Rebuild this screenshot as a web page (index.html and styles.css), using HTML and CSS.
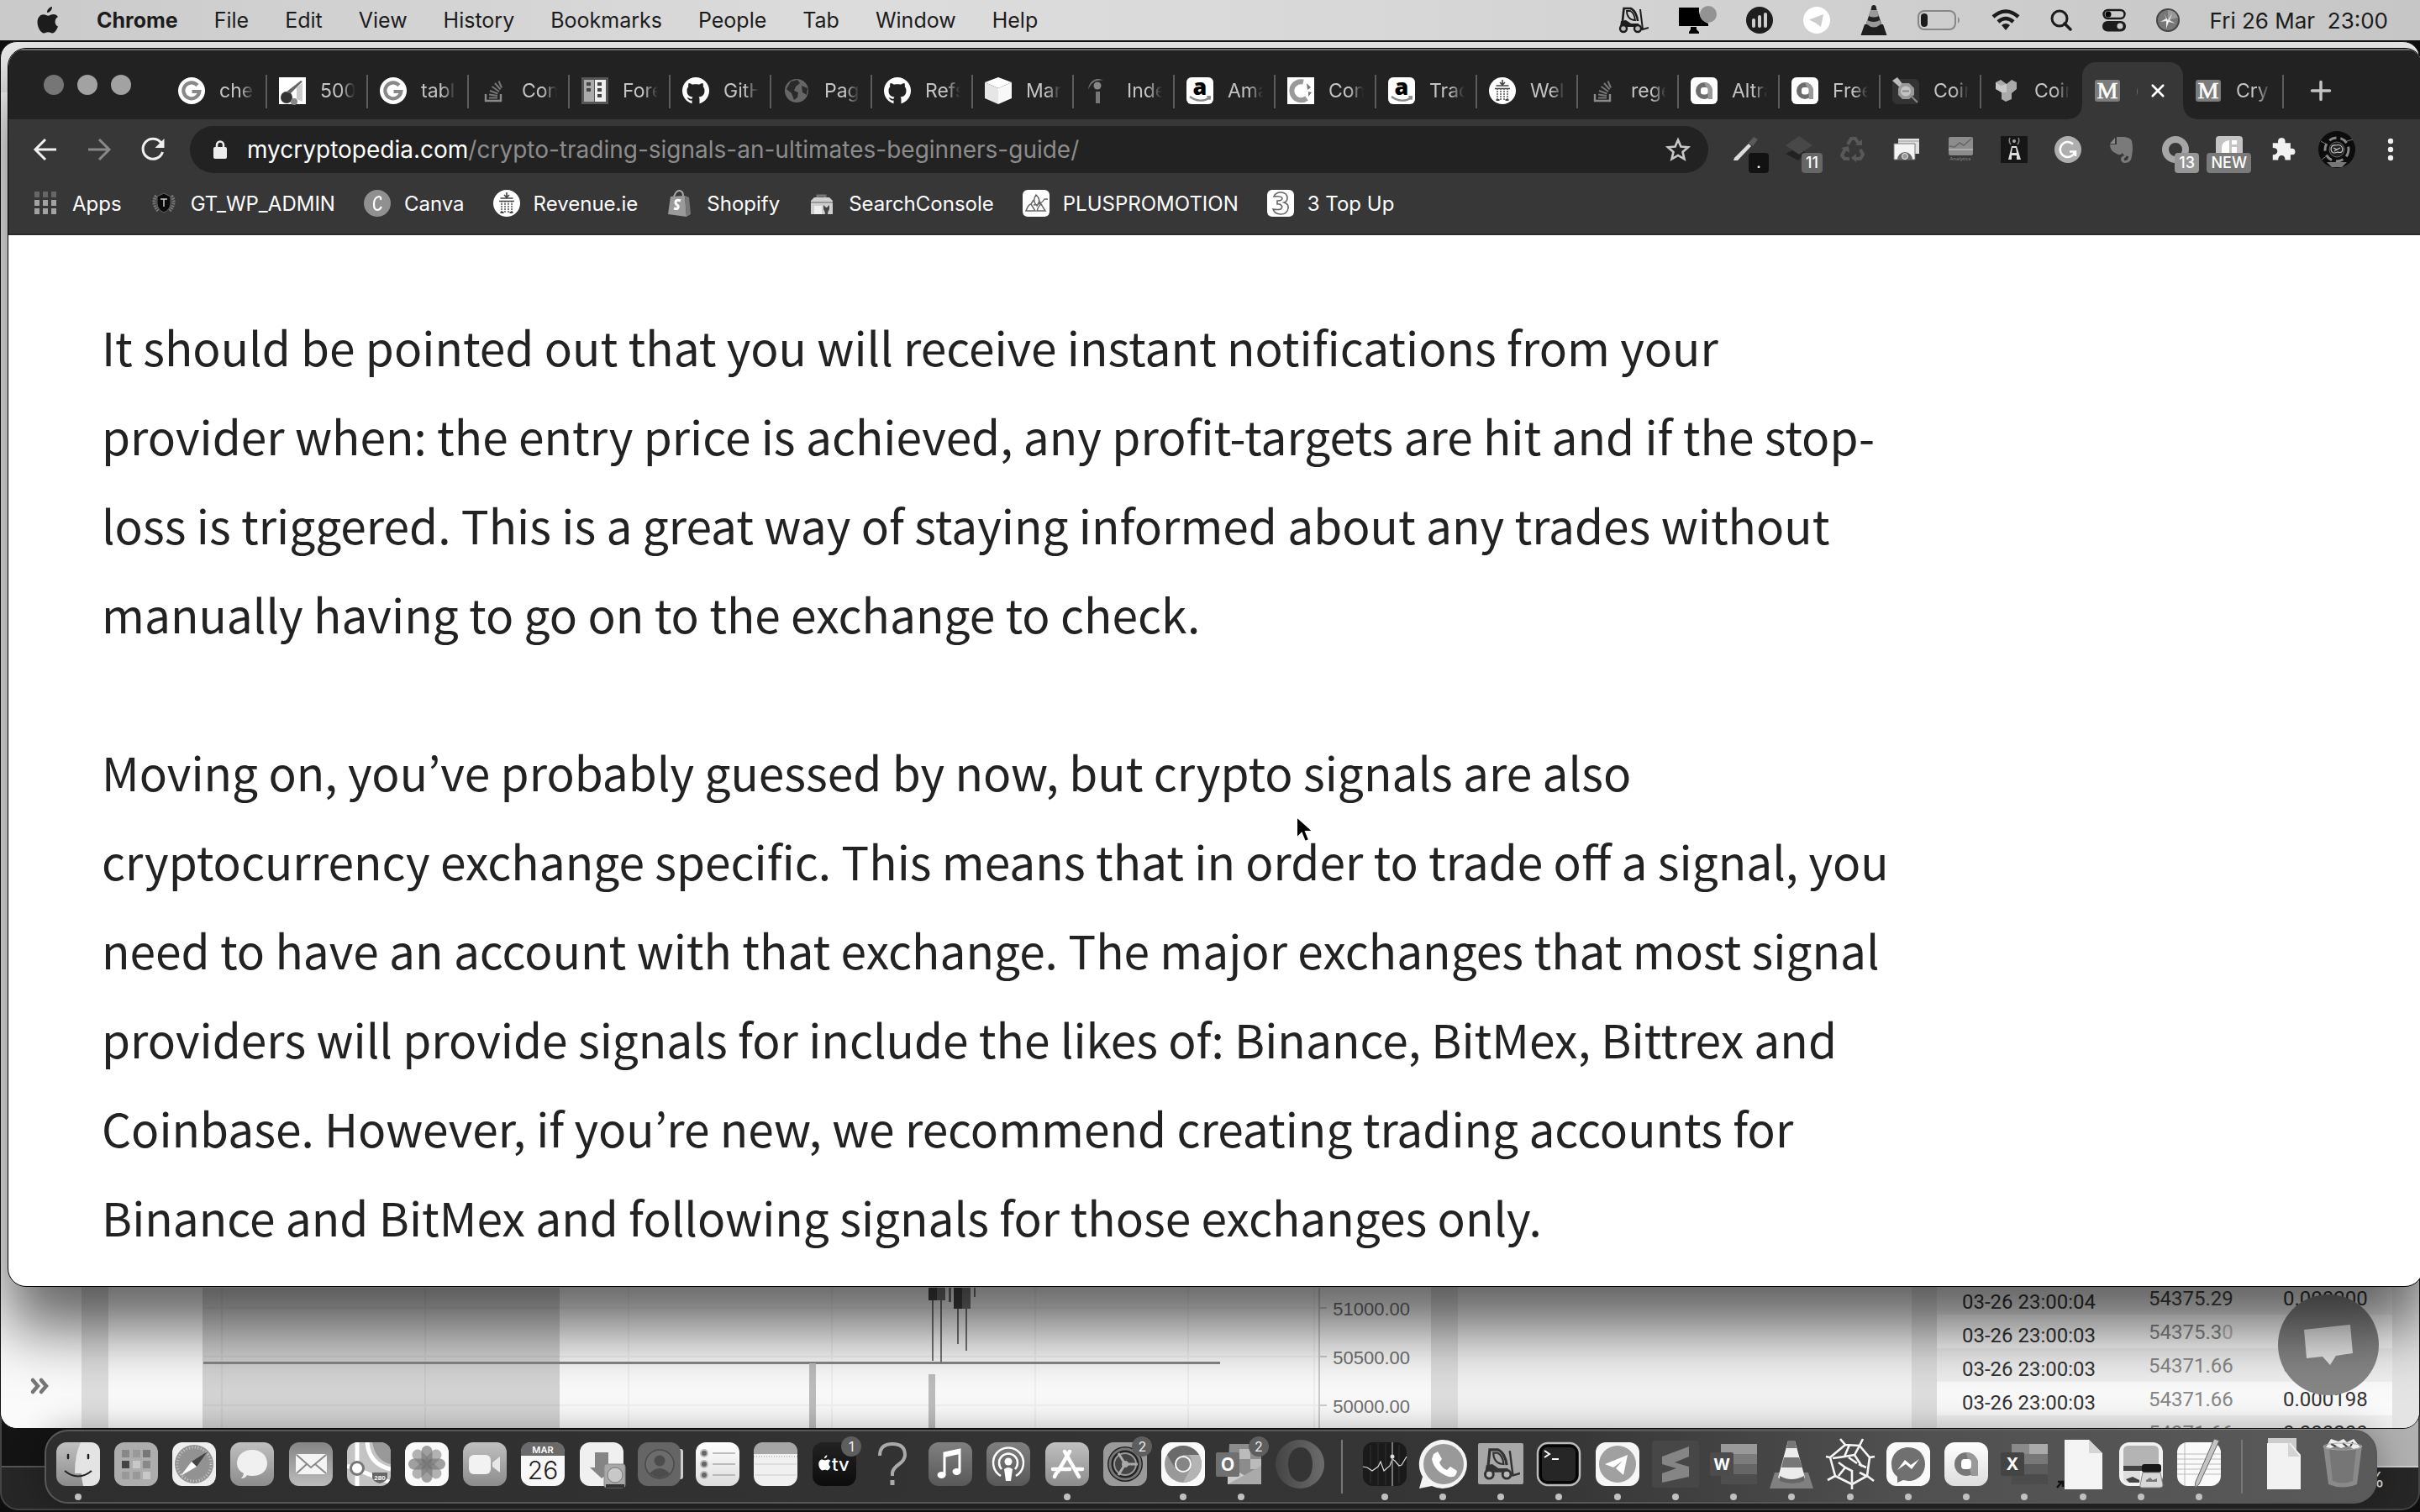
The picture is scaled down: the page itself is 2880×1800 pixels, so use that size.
FILE: index.html
```html
<!DOCTYPE html>
<html lang="en">
<head>
<meta charset="utf-8">
<title>Crypto Trading Signals</title>
<link rel="stylesheet" href="styles.css">
</head>
<body>
<svg class="sprite" aria-hidden="true">
  <defs>
    <linearGradient id="gl" x2="0" y2="1"><stop stop-color="#fff"/><stop offset="1" stop-color="#ddd"/></linearGradient>
    <linearGradient id="gm" x2="0" y2="1"><stop stop-color="#c0c0c0"/><stop offset="1" stop-color="#8c8c8c"/></linearGradient>
    <linearGradient id="gr" x2="0" y2="1"><stop stop-color="#858585"/><stop offset="1" stop-color="#bcbcbc"/></linearGradient>
    <linearGradient id="gd" x2="0" y2="1"><stop stop-color="#808080"/><stop offset="1" stop-color="#585858"/></linearGradient>
    <linearGradient id="gk" x2="0" y2="1"><stop stop-color="#222"/><stop offset="1" stop-color="#0c0c0c"/></linearGradient>
    <linearGradient id="gh"><stop stop-color="#444"/><stop offset="1" stop-color="#6c6c6c"/></linearGradient>
  </defs>
  <symbol id="google" viewBox="0 0 32 32"><circle cx="16" cy="16" r="16" fill="#fff"/><path d="M23 9.500A9.500 9.500 0 1 0 25.300 17H16.500" fill="none" stroke="#888" stroke-width="4.200"/></symbol>
  <symbol id="github" viewBox="0 0 32 32"><circle cx="16" cy="16" r="16" fill="#fff"/><path d="M11.500 32v-4.500c-4 .8-4.500-2-6-3.200 2.600-.4 3 2.200 6 1.400.1-1 .5-1.700 1-2.200-4.600-.6-7-2.700-7-7.500 0-2 .7-3.500 1.700-4.700-.3-1.600-.2-3 .3-4.300 1.800 0 3.200.9 4.400 1.700 2.700-.6 5.500-.6 8.200 0 1.200-.8 2.600-1.700 4.400-1.700.5 1.300.6 2.700.3 4.300 1 1.200 1.700 2.700 1.700 4.700 0 4.800-2.400 6.900-7 7.500.8.800 1 1.800 1 3.200V32z" fill="#222"/></symbol>
  <symbol id="stack" viewBox="0 0 32 32"><path d="M6 20v8h18v-8" fill="none" stroke="#8a8a8a" stroke-width="2.400"/><path d="M10 24.500h10M10 20.500l10 1.500M11 16l9.500 3.500M13.500 11l8.500 6M17 7l6.500 7.500M21.500 4.500l3.500 8" stroke="#777" stroke-width="2"/></symbol>
  <symbol id="amazon" viewBox="0 0 32 32"><rect width="32" height="32" rx="6" fill="#fff"/><text x="16" y="21" text-anchor="middle" font-family="Open Sans, sans-serif" font-weight="800" font-size="27">a</text><path d="M4 23c8 6 17 6 23 1.500M24.500 23l3.500.2-.6 3.500" fill="none" stroke="#888" stroke-width="2.200"/></symbol>
  <symbol id="harp" viewBox="0 0 32 32"><circle cx="16" cy="16" r="16" fill="#fff"/><path d="M16 3v6M13 6l3 3 3-3M8.500 10h15M7 13.500h18" fill="none" stroke="#444" stroke-width="1.600"/><path d="M10 13v14M14 13v14M18 13v14M22 13v14" stroke="#555" stroke-width="1.500" stroke-dasharray="2 1"/><path d="M8.500 27h4M19.500 27h4" stroke="#444" stroke-width="2"/></symbol>
  <symbol id="ring" viewBox="0 0 32 32"><rect width="32" height="32" rx="6" fill="#fff"/><circle cx="16" cy="16" r="10" fill="#6c6c6c"/><path d="M16 6a10 10 0 0 1 10 10v10h-5l-1-10z" fill="#999"/><rect x="12" y="12" width="8.500" height="8.500" rx="3" fill="#fff"/></symbol>
  <symbol id="em" viewBox="0 0 32 32"><rect x="1" y="3" width="30" height="26" rx="3" fill="#7c7c7c"/><text x="16" y="25" text-anchor="middle" font-family="Liberation Serif, serif" font-size="28" fill="#fff" stroke="#fff" stroke-width=".6">M</text></symbol>
  <symbol id="fork" viewBox="0 0 36 32"><path d="M5 17 6.500 2h8c5 2 8 9 8.500 15" fill="none" stroke="currentColor" stroke-width="2.600"/><path d="M10 5h4c4 2 5.500 6 6 11-6 0-10-4-10-11z" fill="none" stroke="currentColor" stroke-width="1.800"/><path d="M3 17l6-1 6 4h9v4H2z" fill="currentColor"/><path d="M26 3l3 24 7-2" fill="none" stroke="currentColor" stroke-width="2"/><circle cx="6" cy="26" r="4" fill="#bbb" stroke="currentColor" stroke-width="2.400"/><circle cx="23" cy="26" r="4" fill="#bbb" stroke="currentColor" stroke-width="2.400"/></symbol>
  <symbol id="apple" viewBox="0 0 26 32"><path d="M18 0c.2 3.500-2.600 7-6 7C11.700 3.700 14.800.4 18 0zM25 23.500C23.500 27.500 21 31.500 18.400 31.500c-2 0-2.600-1.200-5-1.200s-3.100 1.200-5 1.200C4.500 31.500.5 24.500.5 18.500c0-6 3.700-9.300 7.300-9.300 2.300 0 4 1.500 5.600 1.500 1.500 0 3.600-1.700 6.400-1.700 2 0 4 1 5.200 2.900-5 3-4 9.800 0 11.600z" fill="currentColor"/></symbol>
  <symbol id="plane" viewBox="0 0 32 32"><path d="M7 15.500 24 9l-3 15-6-4.500z" fill="currentColor"/></symbol>
</svg>

<header class="menubar">
  <nav class="menus" aria-label="Menu bar">
    <button aria-label="Apple menu"><svg width="26" height="32"><use href="#apple"/></svg></button>
    <button class="strong">Chrome</button><button>File</button><button>Edit</button><button>View</button><button>History</button><button>Bookmarks</button><button>People</button><button>Tab</button><button>Window</button><button>Help</button>
  </nav>
  <div class="status">
    <svg width="36" height="32"><use href="#fork"/></svg>
    <svg width="44" height="36" viewBox="0 0 44 36"><path d="M0 3h24c-1 10 4 16 11 19v3H0z M14 26h7v3l3 3v2H12v-2l2-3z"/><circle cx="35" cy="11" r="10" fill="#939393"/></svg>
    <svg width="32" height="32" viewBox="0 0 32 32"><circle cx="16" cy="16" r="16" fill="#1e1e1e"/><path d="M9 23v-7M16 23V12M23 23V9" stroke="#ccc" stroke-width="4" stroke-linecap="round"/></svg>
    <svg class="pale" width="32" height="32" viewBox="0 0 32 32"><circle cx="16" cy="16" r="16" fill="#fff"/><use href="#plane"/></svg>
    <svg width="32" height="36" viewBox="0 0 32 36"><path d="M13 4q0-4 3-4t3 4l8 24H5z" fill="#222"/><path d="M12 6l-2 7q6 3 12 0l-2-7zM8 18l-1.500 6q9 7 19 0L23 18q-7 4-15 0z" fill="#999"/><path d="M5 23h3q8 7 16 0h3l4.500 13H.5z" fill="#1e1e1e"/></svg>
    <svg width="52" height="24" viewBox="0 0 52 24"><rect x="1" y="1" width="44" height="22" rx="7" fill="none" stroke="#868686" stroke-width="2"/><rect x="4" y="4" width="8" height="16" rx="4" fill="#1c1c1c"/><path d="M48 8q4 4 0 8z" fill="#868686"/></svg>
    <svg width="34" height="26" viewBox="0 0 34 26"><path d="M2 9q15-13 30 0M8 15q9-8 18 0" fill="none" stroke="#1c1c1c" stroke-width="4.500"/><path d="M12 19q5-4 10 0l-5 6z" fill="#1c1c1c"/></svg>
    <svg width="26" height="26" viewBox="0 0 26 26"><circle cx="11" cy="11" r="9" fill="none" stroke="#1c1c1c" stroke-width="3"/><path d="M17 17l7 7" stroke="#1c1c1c" stroke-width="3.500" stroke-linecap="round"/></svg>
    <svg width="28" height="28" viewBox="0 0 28 28"><rect x="1.500" y="2" width="25" height="10" rx="5" fill="none" stroke="#1c1c1c" stroke-width="2.500"/><circle cx="7" cy="7" r="3.500"/><rect y="15" width="28" height="12.500" rx="6" fill="#1c1c1c"/><circle cx="21" cy="21" r="3.500" fill="#ccc"/></svg>
    <svg width="28" height="28" viewBox="0 0 28 28"><circle cx="14" cy="14" r="13" fill="#777" stroke="#444" stroke-width="2"/><path d="M14 2q9 0 12 9L14 14z" fill="#999"/><path d="M14 14l5-8-3 8 7 4-8-2-3 8 0-9-7 1 7-4-3-6z" fill="#eee"/></svg>
    <time>Fri 26 Mar&nbsp; 23:00</time>
  </div>
</header>

<main class="desktop">
  <section class="window behind" aria-hidden="true"><span>%</span></section>

  <section class="window exchange" aria-label="Exchange">
    <div class="rail"><svg width="22" height="18" viewBox="0 0 22 18"><path d="M2 2l6 7-6 7M12 2l6 7-6 7" fill="none" stroke="#777" stroke-width="4.500" stroke-linecap="round"/></svg></div>
    <div class="chart">
      <svg width="1574" height="167" viewBox="128 1533 1574 167">
        <rect x="240" y="1533" width="425" height="167" fill="#d4d4d4"/>
        <path d="M263 1533v167M505 1533v167M747 1533v167M989 1533v167M1231 1533v167M1413 1533v167M1563 1533v167M241 1557h1328M241 1615h1328M241 1673h1328" stroke="#000" stroke-opacity=".04" stroke-width="2"/>
        <path d="M1569 1533v167M1569 1557h9M1569 1615h9M1569 1673h9" stroke="#ccc" stroke-width="2"/>
        <rect x="241" y="1621" width="1210" height="3" fill="#888"/>
        <path d="M962 1623h8v77h-8zM1104 1636h8v64h-8z" fill="#bdbdbd"/>
        <path d="M1109 1540v80M1119 1540v82M1139 1550v50M1149 1550v58" stroke="#777" stroke-width="2"/>
        <path d="M1104 1533h10v15h-10zM1134 1533h10v25h-10z" fill="#444"/>
        <path d="M1114 1533h10v15h-10zM1144 1533h10v25h-10zM1128 1533h3v17h-3zM1158 1533h2v11h-2z" fill="#777"/>
      </svg>
      <ul class="scale"><li>51000.00</li><li>50500.00</li><li>50000.00</li></ul>
    </div>
    <div class="book"></div>
    <div class="trades">
      <table>
        <tr><td>03-26 23:00:04</td><td class="sell">54375.29</td><td>0.000200</td></tr>
        <tr><td>03-26 23:00:03</td><td class="buy">54375.3<i>0</i></td><td></td></tr>
        <tr><td>03-26 23:00:03</td><td class="buy">54371.66</td><td>0.000200</td></tr>
        <tr><td>03-26 23:00:03</td><td class="buy">54371.66</td><td>0.000198</td></tr>
        <tr><td></td><td class="buy">54371.66</td><td>0.000200</td></tr>
      </table>
      <button class="chat" aria-label="Chat"><svg width="60" height="50" viewBox="0 0 60 50"><path d="M1 7 56 1l3 34-20 3-7 11-9-10-19 2z" fill="#e6e6e6"/></svg></button>
    </div>
  </section>

  <section class="window browser" aria-label="Chrome">
    <div class="tabstrip">
      <div class="lights"><button aria-label="Close"></button><button aria-label="Minimise"></button><button aria-label="Zoom"></button></div>
      <nav class="tabs" aria-label="Tabs">
        <a href="#t1"><svg><use href="#google"/></svg><span>che</span></a>
        <a href="#t2"><svg viewBox="0 0 32 32"><path fill="#fff" d="M0 0h32v32H0z"/><circle cx="9" cy="24" r="7" fill="#333"/><circle cx="18" cy="29" r="4" fill="#888"/><path d="M8 18 26 4l2 1-14 14z" fill="#666"/><path d="M21 26V12l7-5v22z" fill="#ccc"/></svg><span>500</span></a>
        <a href="#t3"><svg><use href="#google"/></svg><span>tabl</span></a>
        <a href="#t4"><svg><use href="#stack"/></svg><span>Con</span></a>
        <a href="#t5"><svg viewBox="0 0 32 32"><path fill="#555" d="M0 0h32v32H0z"/><path d="M3 3h12v26H3z" fill="#aaa"/><path d="M16 3h13v26H16z" fill="#eee"/><path d="M6 6h5v4H6zM6 13h5v4H6zM19 6h5v4h-5zM19 13h5v4h-5zM19 20h5v4h-5z" fill="#444"/></svg><span>Fore</span></a>
        <a href="#t6"><svg><use href="#github"/></svg><span>GitH</span></a>
        <a href="#t7"><svg viewBox="0 0 32 32"><circle cx="16" cy="16" r="14" fill="#666"/><path d="M9 5l8-2 3 4-5 4-2 5 5 2-1 6-4 3-3-8-6-5zM22 10l7 3-1 8-5-3z" fill="#2a2a2a"/></svg><span>Pag</span></a>
        <a href="#t8"><svg><use href="#github"/></svg><span>Refs</span></a>
        <a href="#t9"><svg viewBox="0 0 32 32"><path d="M16 0l16 6-16 7L0 6z" fill="#fff"/><path d="M0 6l16 7v19L0 25z" fill="#e6e6e6"/><path d="M32 6l-16 7v19l16-7z" fill="#f8f8f8"/></svg><span>Mar</span></a>
        <a href="#t10"><svg viewBox="0 0 32 32"><path d="M3 15C4 4 13-1 21 4 12 2 6 7 3 15z" fill="#777"/><circle cx="14" cy="10" r="4.500" fill="#888"/><path d="M12 17h5v14h-5z" fill="#777"/></svg><span>Inde</span></a>
        <a href="#t11"><svg><use href="#amazon"/></svg><span>Ama</span></a>
        <a href="#t12"><svg viewBox="0 0 32 32"><path fill="#fff" d="M0 0h32v32H0z"/><path d="M19 5.500A11 11 0 1 0 23 25" fill="none" stroke="#999" stroke-width="6"/><path d="M23 7l5 5-4 3zM25 17l4 1-4 5z" fill="#777"/></svg><span>Con</span></a>
        <a href="#t13"><svg><use href="#amazon"/></svg><span>Trac</span></a>
        <a href="#t14"><svg><use href="#harp"/></svg><span>Wel</span></a>
        <a href="#t15"><svg><use href="#stack"/></svg><span>rege</span></a>
        <a href="#t16"><svg><use href="#ring"/></svg><span>Altra</span></a>
        <a href="#t17"><svg><use href="#ring"/></svg><span>Free</span></a>
        <a href="#t18"><svg viewBox="0 0 32 32"><rect y="2" width="32" height="30" rx="6" fill="#333"/><path d="M0 4l6-4 7 9-4 3z" fill="#bbb"/><path d="M12 7h8l6 6v8l-6 5h-8l-5-5v-8z" fill="#999"/><circle cx="16" cy="16.500" r="6" fill="#c4c4c4"/><path d="M12 16.500h8M22 22l8 8" stroke="#888" stroke-width="2"/></svg><span>Coin</span></a>
        <a href="#t19"><svg viewBox="0 0 32 32"><path d="M3 6l6-3 7 5 6-5 6 3v8l-6 5v7l-7 3-5-3v-8l-7-5z" fill="#aaa"/><path d="M3 6l6 4 7-2v10l-6 0-7-4z" fill="#c8c8c8"/></svg><span>Coin</span></a>
        <a href="#t20" class="active" aria-current="page"><svg><use href="#em"/></svg><span class="sliver">(</span><button aria-label="Close tab"><svg viewBox="0 0 18 18"><path d="M2 2l14 14M16 2 2 16" stroke="#fff" stroke-width="3" stroke-linecap="round"/></svg></button></a>
        <a href="#t21"><svg><use href="#em"/></svg><span>Cry</span></a>
      </nav>
      <button class="newtab" aria-label="New tab"><svg width="24" height="24" viewBox="0 0 24 24"><path d="M12 1.500v21M1.500 12h21" stroke="#c4c4c4" stroke-width="3.500" stroke-linecap="round"/></svg></button>
    </div>

    <div class="toolbar">
      <button aria-label="Back"><svg width="28" height="28" viewBox="0 0 28 28"><path d="M27 14H3M14 2 2 14l12 12" fill="none" stroke="#f0f0f0" stroke-width="3"/></svg></button>
      <button aria-label="Forward"><svg width="28" height="28" viewBox="0 0 28 28"><path d="M1 14h24M14 2l12 12-12 12" fill="none" stroke="#888" stroke-width="3"/></svg></button>
      <button aria-label="Reload"><svg width="28" height="28" viewBox="0 0 28 28"><path d="M24 6.500A12 12 0 1 0 25.500 17" fill="none" stroke="#f0f0f0" stroke-width="3"/><path d="M27.500 1v11h-11z" fill="#f0f0f0"/></svg></button>
      <div class="omnibox">
        <svg width="16" height="22" viewBox="0 0 16 22"><rect y="8" width="16" height="14" rx="2" fill="#eee"/><path d="M4 9V5.500a4 4 0 0 1 8 0V9" fill="none" stroke="#eee" stroke-width="2.500"/></svg>
        <a href="#top">mycryptopedia.com<span>/crypto-trading-signals-an-ultimates-beginners-guide/</span></a>
        <button aria-label="Bookmark this tab"><svg width="30" height="30" viewBox="0 0 30 30"><path d="M15 3.500l3.400 8 8.600.7-6.500 5.700 2 8.500-7.500-4.500-7.500 4.500 2-8.500L3 12.200l8.600-.7z" fill="none" stroke="#c8c8c8" stroke-width="2.600"/></svg></button>
      </div>
      <div class="extensions">
        <button aria-label="Eyedropper"><svg viewBox="0 0 32 32"><path d="M20 8l6-7 5 3-6 8z" fill="#5a5a5a"/><path d="M3 26 20 9l3 3L7 29H2z" fill="#ddd"/></svg><b class="black">.</b></button>
        <button aria-label="Layers"><svg viewBox="0 0 32 32"><path d="M0 21l16-8 8 7-9 9z" fill="#222"/><path d="M16 0l16 11-16 11L0 11z" fill="#484848"/></svg><b>11</b></button>
        <button aria-label="Recycle"><svg viewBox="0 0 32 32"><path d="M10 10l4-7h5l4 6M25 16l3 6-3 5h-7M12 27H6l-3-4 4-8" fill="none" stroke="#585858" stroke-width="4"/><path d="M19 11h8V4zM20 21v10l-6-5zM2 14l9-2 1 8z" fill="#585858"/></svg></button>
        <button aria-label="Screens"><svg viewBox="0 0 32 32"><path d="M6 3h25v18H6z" fill="#e0e0e0"/><path d="M6 6h25" stroke="#999"/><path d="M1 9h25v19H1z" fill="#f4f4f4" stroke="#777"/><path d="M5 28a9 9 0 0 1 18 0z" fill="#666"/><circle cx="14" cy="24" r="3.500" fill="#999" stroke="#eee"/></svg></button>
        <button aria-label="Analytics"><svg viewBox="0 0 32 32"><rect x="2" y="1" width="29" height="22" rx="2" fill="#8c8c8c"/><path d="M3 12l6 1 6-5 5 3 9-8" fill="none" stroke="#666" stroke-width="1.500"/><path d="M2 16h29" stroke="#ccc"/><text x="16" y="29" text-anchor="middle" font-family="Noto Sans, sans-serif" font-size="6" fill="#888">Analytics</text></svg></button>
        <button aria-label="Antenna"><svg viewBox="0 0 32 32"><path fill="#161616" d="M0 0h32v32H0z"/><path d="M13 12h6l5 16h-5v-5h-6v5H9z" fill="#ddd"/><path d="M14 14h4l1 6h-6z" fill="#161616"/><circle cx="16" cy="6" r="2" fill="#aaa"/><path d="M11 2q-2 4 1 8M21 2q2 4-1 8" fill="none" stroke="#888" stroke-width="1.500"/></svg></button>
        <button aria-label="Grammar"><svg viewBox="0 0 32 32"><circle cx="16" cy="16" r="16" fill="#aeaeae"/><path d="M22 9.500A9 9 0 1 0 24.500 18M18 18.500h7V24" fill="none" stroke="#fff" stroke-width="2.600"/></svg></button>
        <button aria-label="Notes"><svg viewBox="0 0 32 32"><path d="M10 1h9q8 1 9 5 2 8 0 18-1 8-8 8-5 0-5-5 1-4 6-4v2q-3 1-2 4 5 1 5-5-6 0-7-4-3 4-7 1-8-3-8-11h8z" fill="#7a7a7a"/><path d="M8 2v7H2z" fill="#8a8a8a"/></svg></button>
        <button aria-label="Ring"><svg viewBox="0 0 32 32"><circle cx="16" cy="16" r="12" fill="none" stroke="#a6a6a6" stroke-width="8"/></svg><b class="pale">13</b></button>
        <button aria-label="Guide"><svg viewBox="0 0 32 32"><rect width="32" height="32" rx="4" fill="#c4c4c4"/><path d="M7 24V14q0-8 9-9v19zM19 13h6v12h-6zM19 5h6v5h-6z" fill="#fff"/></svg><b class="wide">NEW</b></button>
        <button aria-label="Extensions"><svg viewBox="0 0 32 32"><path d="M3 8h7q-1-7 4.500-7T19 8h7v7q6-1 6 4t-6 4v7h-7q0-6-4.500-6T10 30H3v-7q6 0 6-4.500T3 14z" fill="#f2f2f2" transform="translate(1 1) scale(.92)"/></svg></button>
        <button aria-label="Profile"><svg class="avatar" viewBox="0 0 44 44"><circle cx="22" cy="22" r="22" fill="#0c0c0c"/><circle cx="22" cy="22" r="14" fill="none" stroke="#888" stroke-width="3" stroke-dasharray="9 5"/><circle cx="22" cy="22" r="9" fill="#222" stroke="#666"/><path d="M15 22q0-6 6-5 6-2 8 4 0 6-6 4-7 3-8-3zM18 20l4 2 4-2M19 24l3-2" fill="none" stroke="#ccc" stroke-width="1.200"/><path d="M10 37h24l-6 6H16z" fill="#777"/><path d="M3 12l7 4M34 12l7-2M4 34l7-5" stroke="#777"/></svg></button>
        <button aria-label="Menu"><svg viewBox="0 0 32 32"><circle cx="16" cy="6" r="3.200" fill="#f0f0f0"/><circle cx="16" cy="16" r="3.200" fill="#f0f0f0"/><circle cx="16" cy="26" r="3.200" fill="#f0f0f0"/></svg></button>
      </div>
    </div>

    <nav class="bookmarks" aria-label="Bookmarks">
      <a href="#b0"><svg viewBox="0 0 32 32"><path d="M3 2h6v7H3zM13 2h6v7h-6zM23 2h6v7h-6z" fill="#666"/><path d="M3 12h6v7H3zM13 12h6v7h-6zM23 12h6v7h-6zM3 22h6v7H3zM13 22h6v7h-6zM23 22h6v7h-6z" fill="#a2a2a2"/></svg>Apps</a>
      <a href="#b1"><svg viewBox="0 0 32 32"><path d="M7 7q-6 8 2 18M25 7q6 8-2 18" fill="none" stroke="#777" stroke-width="4" stroke-dasharray="2 1"/><path d="M16 4l8 4v9q-1 7-8 10-7-3-8-10V8z" fill="#0a0a0a" stroke="#666"/><path d="M12 11h8M16 11v9" stroke="#ccc" stroke-width="1.500"/></svg>GT_WP_ADMIN</a>
      <a href="#b2"><svg viewBox="0 0 32 32"><circle cx="16" cy="16" r="16" fill="#909090"/><path d="M20 12q1-4-2-4-6 1-6 9 0 7 4 7 3 0 5-4" fill="none" stroke="#fff" stroke-width="2.200"/></svg>Canva</a>
      <a href="#b3"><svg><use href="#harp"/></svg>Revenue.ie</a>
      <a href="#b4"><svg viewBox="0 0 32 32"><path d="M5 8l17-1 2 25-22-3z" fill="#9a9a9a"/><path d="M22 7l5 2 2 20-5 3z" fill="#777"/><path d="M9 8q3-8 7-7 4 1 4 6" fill="none" stroke="#aaa" stroke-width="2"/><path d="M17 13q-6-2-6 2 0 2 3 4 1 5-5 3" fill="none" stroke="#fff" stroke-width="3"/></svg>Shopify</a>
      <a href="#b5"><svg viewBox="0 0 32 32"><path d="M11 9V7h9v2" fill="none" stroke="#777" stroke-width="3"/><path d="M3 13l4-4h18l4 4v16H3z" fill="#cfcfcf"/><path d="M3 15h26" stroke="#999" stroke-width="2"/><path d="M7 19h9v10H7z" fill="#eee"/><path d="M18 18v5q2 3 2 6h3q0-3 2-6v-5l-3 3h-1z" fill="#444"/></svg>SearchConsole</a>
      <a href="#b6"><svg viewBox="0 0 32 32"><rect width="32" height="32" rx="6" fill="#fff"/><path d="M16 6q7 6 1 13-6-6-1-13zM4 25q3-8 6-8l5 8zM17 25q2-6 5-8l5 8zM13 18q9 0 13-7h4M10 17l3-5M22 17l-3-5" fill="none" stroke="#666" stroke-width="1.500"/></svg>PLUSPROMOTION</a>
      <a href="#b7"><svg viewBox="0 0 32 32"><rect width="32" height="32" rx="6" fill="#fff"/><path d="M8 8q2-5 8-5 8 0 8 7 0 4-4 5 6 2 5 7-1 7-9 7-7 0-9-6 6 1 9 0 4-3-1-6h-3v-4q6 0 6-3-1-3-10-2z" fill="#fff" stroke="#666" stroke-width="1.600"/></svg>3 Top Up</a>
    </nav>

    <article id="top">
      <p>It should be pointed out that you will receive instant notifications from your provider when: the entry price is achieved, any profit-targets are hit and if the stop-loss is triggered. This is a great way of staying informed about any trades without manually having to go on to the exchange to check.</p>
      <p>Moving on, you’ve probably guessed by now, but crypto signals are also cryptocurrency exchange specific. This means that in order to trade off a signal, you need to have an account with that exchange. The major exchanges that most signal providers will provide signals for include the likes of: Binance, BitMex, Bittrex and Coinbase. However, if you’re new, we recommend creating trading accounts for Binance and BitMex and following signals for those exchanges only.</p>
    </article>
  </section>
</main>

<nav class="dock" aria-label="Dock">
  <button class="on" aria-label="Finder"><svg viewBox="0 0 52 52"><rect width="52" height="52" rx="12" fill="url(#gm)"/><path d="M29 0h11q12 0 12 12v28q0 12-12 12h-8q-2-8-2-15h-8Q22 15 29 0z" fill="#e4e4e4"/><path d="M14 15v4M38 15v4" stroke="#222" stroke-width="2.500" stroke-linecap="round"/><path d="M10 34q16 13 32 0" fill="none" stroke="#222" stroke-width="2"/></svg></button>
  <button aria-label="Launchpad"><svg viewBox="0 0 52 52"><rect width="52" height="52" rx="12" fill="#adadad"/><path d="M9 9h9v9H9zM34 22h9v9h-9z" fill="#888"/><path d="M22 9h9v9h-9zM9 35h9v9H9zM22 35h9v9h-9z" fill="#999"/><path d="M34 9h9v9h-9z" fill="#777"/><path d="M9 22h9v9H9z" fill="#444"/><path d="M22 22h9v9h-9zM34 35h9v9h-9z" fill="#c8c8c8"/></svg></button>
  <button aria-label="Safari"><svg viewBox="0 0 52 52"><rect width="52" height="52" rx="12" fill="#eee"/><circle cx="26" cy="26" r="23" fill="#929292"/><circle cx="26" cy="26" r="20" fill="none" stroke="#ccc" stroke-width="3" stroke-dasharray="1 2.500"/><path d="M42 11 29 29l-6-6z" fill="#444"/><path d="M10 40 23 23l6 6z" fill="#fff"/></svg></button>
  <button aria-label="Messages"><svg viewBox="0 0 52 52"><rect width="52" height="52" rx="12" fill="url(#gm)"/><path d="M26 9c11 0 18 7 18 16s-7 15-18 15q-4 0-6-1-2 4-7 4 3-3 3-6-8-4-8-12c0-9 7-16 18-16z" fill="#f0f0f0"/></svg></button>
  <button aria-label="Mail"><svg viewBox="0 0 52 52"><rect width="52" height="52" rx="12" fill="url(#gr)"/><rect x="8" y="14" width="37" height="24" rx="3" fill="#f4f4f4"/><path d="M9 15l17 15 18-15M9 37l12-11M44 37 31 26" fill="none" stroke="#888" stroke-width="2"/></svg></button>
  <button aria-label="Maps"><svg class="tile" viewBox="0 0 52 52"><path d="M0 0h52v52H0z" fill="#c4c4c4"/><path d="M30 0q4 22 22 26V0z" fill="#999"/><path d="M24 0q2 26 28 32M12 0v52M0 28l52 20" fill="none" stroke="#fff" stroke-width="5"/><circle cx="12" cy="31" r="7.500" fill="#fff" stroke="#777" stroke-width="3"/><path d="M30 36h18v6q-1 5-9 7-8-2-9-7z" fill="#666"/><text x="39" y="45" text-anchor="middle" font-family="Liberation Sans, sans-serif" font-weight="700" font-size="8" fill="#fff">280</text></svg></button>
  <button aria-label="Photos"><svg viewBox="0 0 52 52"><rect width="52" height="52" rx="12" fill="#fafafa"/><g fill="#555" fill-opacity=".55"><rect x="19.500" y="4" width="13" height="22" rx="6.500"/><rect x="19.500" y="26" width="13" height="22" rx="6.500"/><rect x="4" y="19.500" width="22" height="13" rx="6.500"/><rect x="26" y="19.500" width="22" height="13" rx="6.500"/><g transform="rotate(45 26 26)" fill="#777"><rect x="19.500" y="4" width="13" height="22" rx="6.500"/><rect x="19.500" y="26" width="13" height="22" rx="6.500"/><rect x="4" y="19.500" width="22" height="13" rx="6.500"/><rect x="26" y="19.500" width="22" height="13" rx="6.500"/></g></g></svg></button>
  <button aria-label="FaceTime"><svg viewBox="0 0 52 52"><rect width="52" height="52" rx="12" fill="url(#gm)"/><rect x="7" y="15" width="26" height="23" rx="6" fill="#f2f2f2"/><path d="M35 24l9-7v19l-9-7z" fill="#e8e8e8"/></svg></button>
  <button aria-label="Calendar"><svg viewBox="0 0 52 52"><rect width="52" height="52" rx="12" fill="#f8f8f8"/><path d="M0 16v-4Q0 0 12 0h28q12 0 12 12v4z" fill="#6a6a6a"/><text x="26" y="13" text-anchor="middle" font-family="Inter, sans-serif" font-weight="600" font-size="11" fill="#fff">MAR</text><text x="26" y="44" text-anchor="middle" font-family="Inter, sans-serif" font-weight="300" font-size="30" fill="#222">26</text></svg></button>
  <button aria-label="Installer"><svg viewBox="0 0 52 52"><rect width="52" height="52" rx="12" fill="#f0f0f0"/><path d="M18 12h16v18h8L26 43 12 30h6z" fill="#858585"/><rect x="29" y="26" width="25" height="28" rx="3" fill="#a8a8a8" stroke="#888"/><circle cx="42" cy="39" r="9" fill="#c8c8c8" stroke="#777"/><path d="M31 50h22v4H31z" fill="#333"/></svg></button>
  <button aria-label="Contacts"><svg viewBox="0 0 52 52"><rect x="4" y="8" width="50" height="36" rx="3" fill="#ccc"/><rect width="51" height="52" rx="12" fill="#656565"/><circle cx="26" cy="26" r="17" fill="#6c6c6c" stroke="#4a4a4a" stroke-width="1.500"/><circle cx="26" cy="22" r="6.500" fill="#4c4c4c"/><path d="M14 37q12-12 24 0-12 10-24 0z" fill="#4c4c4c"/></svg></button>
  <button aria-label="Reminders"><svg viewBox="0 0 52 52"><rect width="52" height="52" rx="12" fill="url(#gl)"/><path d="M20 13h27M20 26h27M20 39h27" stroke="#aaa" stroke-width="1.500"/><g fill="#666" stroke="#bbb" stroke-width="2"><circle cx="10" cy="13" r="4"/><circle cx="10" cy="26" r="4"/><circle cx="10" cy="39" r="4"/></g></svg></button>
  <button aria-label="Notes"><svg viewBox="0 0 52 52"><rect width="52" height="52" rx="12" fill="#f0f0f0"/><path d="M0 14v-2Q0 0 12 0h28q12 0 12 12v2z" fill="#a6a6a6"/><path d="M0 17h52" stroke="#999" stroke-dasharray="1 2"/><path d="M1 26h50M1 39h50" stroke="#ccc"/></svg></button>
  <button aria-label="TV"><svg class="light" viewBox="0 0 52 52"><rect width="52" height="52" rx="12" fill="url(#gk)"/><use href="#apple" x="7" y="15" width="15" height="19"/><text x="23" y="34" font-family="Inter, sans-serif" font-weight="500" font-size="22" fill="#fff">tv</text></svg><b>1</b></button>
  <button aria-label="Unknown"><svg viewBox="0 0 52 52"><path d="M11 16q0-14 15-14t15 13q0 6-7 11t-8 10v4" fill="none" stroke="#aaa" stroke-width="4"/><path d="M23.500 45h5v6h-5z" fill="#aaa"/></svg></button>
  <button aria-label="Music"><svg viewBox="0 0 52 52"><rect width="52" height="52" rx="12" fill="url(#gd)"/><path d="M19 39V13l18-4v26" fill="none" stroke="#fff" stroke-width="3"/><path d="M19 12l18-4v6l-18 4z" fill="#fff"/><ellipse cx="15.500" cy="39" rx="5" ry="4" fill="#fff"/><ellipse cx="33.500" cy="35" rx="5" ry="4" fill="#fff"/></svg></button>
  <button aria-label="Podcasts"><svg viewBox="0 0 52 52"><rect width="52" height="52" rx="12" fill="url(#gd)"/><circle cx="26" cy="23" r="4.500" fill="#fff"/><path d="M21 32q5-4 10 0l-2 14h-6z" fill="#fff"/><path d="M18 32a11 11 0 1 1 16 0M17 40a18 18 0 1 1 18 0" fill="none" stroke="#fff" stroke-width="2.500"/></svg></button>
  <button class="on" aria-label="App Store"><svg viewBox="0 0 52 52"><rect width="52" height="52" rx="12" fill="url(#gm)"/><path d="M29 11 15 35M23 11l17 30M9 32h20M36 32h8M13 37l-2 4" stroke="#fff" stroke-width="4.500" stroke-linecap="round"/></svg></button>
  <button aria-label="System Preferences"><svg viewBox="0 0 52 52"><rect width="52" height="52" rx="12" fill="#9a9a9a"/><circle cx="26" cy="26" r="21" fill="#222"/><circle cx="26" cy="26" r="18" fill="none" stroke="#777" stroke-width="3"/><circle cx="26" cy="26" r="13" fill="#444" stroke="#999" stroke-width="2"/><path d="M26 26h15M26 26 18 13M26 26l-8 13" stroke="#aaa" stroke-width="3"/><circle cx="26" cy="26" r="4" fill="#aaa"/></svg><b>2</b></button>
  <button class="on" aria-label="Chrome"><svg viewBox="0 0 52 52"><rect width="52" height="52" rx="12" fill="#fafafa"/><circle cx="26" cy="26" r="22" fill="#999"/><path d="M7 15a22 22 0 0 1 38 0H26l-10 15z" fill="#6a6a6a"/><path d="M45 15a22 22 0 0 1-19 33l9-17q4-8-2-16z" fill="#b4b4b4"/><circle cx="26" cy="26" r="10" fill="#fafafa"/><circle cx="26" cy="26" r="8" fill="#858585"/></svg></button>
  <button class="on" aria-label="Outlook"><svg viewBox="0 0 52 52"><path d="M12 2h38v48H10z" fill="#8c8c8c"/><path d="M24 8h13v12H24zM37 20h13v12H37z" fill="#bbb"/><path d="M10 28l21 12 19-12v22H10z" fill="#ccc"/><path d="M10 50l40-22v22z" fill="#aaa"/><rect x="-4" y="12" width="28" height="29" rx="2" fill="#707070"/><text x="10" y="34" text-anchor="middle" font-family="Inter, sans-serif" font-weight="700" font-size="21" fill="#fff">O</text></svg><b>2</b></button>
  <button aria-label="Opera"><svg viewBox="0 0 52 52"><path d="M26-3a29 29 0 1 0 .1 0zM27 6c9 0 14 9 14 20S36 47 27 47 12 38 12 26 18 6 27 6z" fill="url(#gh)" fill-rule="evenodd"/></svg></button>
  <hr>
  <button class="on" aria-label="Stocks"><svg viewBox="0 0 52 52"><rect width="52" height="52" rx="12" fill="#1a1a1a"/><path d="M9 3v46M18 1v50M27 1v50M43 3v46" stroke="#333"/><path d="M0 29l5 1 6 4 7-5 3-6 4 11 7-6 3-8 3 2 5 6 3-1 6-10" fill="none" stroke="#ddd" stroke-width="1.200"/><path d="M35 0v52" stroke="#999" stroke-width="1.500"/><circle cx="35" cy="17" r="2.500" fill="#ddd"/></svg></button>
  <button class="on" aria-label="WhatsApp"><svg viewBox="0 0 52 52"><path d="M26-3a29 29 0 1 1-13 55l-15 3 4-14A29 29 0 0 1 26-3z" fill="#f4f4f4"/><circle cx="27" cy="26" r="24" fill="#999"/><path d="M15 14l5-3 5 9-3 4q3 7 9 9l4-4 8 5q-1 9-10 7Q16 35 13 20z" fill="#fff"/></svg></button>
  <button class="on" aria-label="Forklift"><svg class="ink" viewBox="0 0 52 52"><rect x="-1" y="1" width="54" height="49" rx="2" fill="#a8a8a8"/><use href="#fork" x="5" y="6" width="44" height="40"/></svg></button>
  <button class="on" aria-label="Terminal"><svg viewBox="0 0 52 52"><rect x="1" y="1" width="50" height="50" rx="12" fill="#050505" stroke="#bbb" stroke-width="2.500"/><rect x="6" y="6" width="40" height="40" rx="6" fill="#262626"/><path d="M9 10l6 4-6 4M18 20h8" fill="none" stroke="#fff" stroke-width="2"/></svg></button>
  <button class="on" aria-label="Telegram"><svg class="light" viewBox="0 0 52 52"><rect width="52" height="52" rx="12" fill="#f6f6f6"/><circle cx="26" cy="26" r="22" fill="#a0a0a0"/><path d="M11 26 38 15l-5 24-9-8 8-9-11 8z" fill="#fff"/></svg></button>
  <button class="on" aria-label="Sublime"><svg viewBox="0 0 52 52"><rect x="-2" y="-2" width="56" height="56" rx="4" fill="#474747"/><path d="M10 17 42 5v12L25 24l17 5v12L10 48V37l17-6-17-5z" fill="#858585"/></svg></button>
  <button class="on" aria-label="Word"><svg viewBox="0 0 52 52"><path d="M11 2h43v12H11z" fill="#999"/><path d="M11 14h43v12H11z" fill="#7c7c7c"/><path d="M11 26h43v12H11z" fill="#666"/><path d="M11 38h43v12H11z" fill="#4e4e4e"/><rect x="-2" y="12" width="28" height="28" rx="2" fill="#4c4c4c"/><text x="12" y="33" text-anchor="middle" font-family="Inter, sans-serif" font-weight="700" font-size="19" fill="#fff">W</text></svg></button>
  <button class="on" aria-label="VLC"><svg viewBox="0 0 52 52"><path d="M6 36h40l6 19H0z" fill="#808080"/><path d="M22-2h8l12 44q-16 10-32 0z" fill="#ececec"/><path d="M22-2h8l2 9H20zM17 18h18l4 12H14z" fill="#777"/><path d="M12 40q14 8 29 0v6q-14 6-29 0z" fill="#666"/></svg></button>
  <button class="on" aria-label="Web"><svg viewBox="0 0 52 52"><path d="M14-4 20 3l17 1 4-8M37 4l12 14 6-1M49 18l-3 22 8 6M46 40 28 50v6M28 50 8 40l-9 5M8 40 2 18l-5-1M2 18 20 3M25 3l-6 14-14 2M19 17l12-2 6-11M31 15l9 14M20 30l-8-6M20 30l8 4v14M20 30l-8 10M36 26l9 4M37 36l8 4M24 18l10 7" fill="none" stroke="#f6f6f6" stroke-width="2.600"/></svg></button>
  <button class="on" aria-label="Messenger"><svg viewBox="0 0 52 52"><rect width="52" height="52" rx="12" fill="#fafafa"/><path d="M26 6c12 0 20 9 20 20s-8 20-20 20l-6-1-7 3v-7q-7-5-7-15C6 15 14 6 26 6z" fill="#707070"/><path d="M13 33l9-12 7 6 10-7-9 12-7-6z" fill="#fff"/></svg></button>
  <button class="on" aria-label="Ring"><svg viewBox="0 0 52 52"><rect width="52" height="52" rx="12" fill="url(#gl)"/><circle cx="26" cy="26" r="14" fill="#777"/><path d="M26 12a14 14 0 0 1 14 14v14h-8z" fill="#999"/><rect x="20" y="20" width="12" height="12" rx="4" fill="#fff"/></svg></button>
  <button class="on" aria-label="Excel"><svg viewBox="0 0 52 52"><path d="M11 2h43v12H11z" fill="#8a8a8a"/><path d="M32 2h22v12H32z" fill="#aaa"/><path d="M11 14h43v12H11z" fill="#787878"/><path d="M11 26h43v12H11z" fill="#5c5c5c"/><path d="M11 38h43v12H11z" fill="#4c4c4c"/><rect x="-2" y="12" width="28" height="28" rx="2" fill="#444"/><text x="12" y="33" text-anchor="middle" font-family="Inter, sans-serif" font-weight="700" font-size="20" fill="#fff">X</text></svg></button>
  <button class="on" aria-label="Document"><svg viewBox="0 0 52 52"><path d="M4-3h29l16 16v43H4z" fill="#f4f4f4"/><path d="M33-3l16 16H33z" fill="#d4d4d4"/><path d="M-5 54l6-7M-4 47h6v6" fill="none" stroke="#111" stroke-width="2.500"/></svg></button>
  <button class="on" aria-label="Preview"><svg viewBox="0 0 52 52"><rect width="52" height="52" rx="12" fill="#f2f2f2"/><path d="M5 28V10q0-6 6-6h30q6 0 6 6v18z" fill="#b4b4b4"/><path d="M5 28h42v6H5z" fill="#444"/><path d="M5 34h20v14H11q-6 0-6-6z" fill="#ddd"/><path d="M8 44l8-3 8 4v3H12z" fill="#444"/><rect x="27" y="26" width="23" height="10" rx="3" fill="#181818"/><path d="M28 36h21l3 15q0 3-4 3H28q-4 0-3-3z" fill="#d8d8d8" stroke="#888"/><path d="M32 45l5-3 3 3 5-2v4H32z" fill="#777"/></svg></button>
  <button class="on" aria-label="TextEdit"><svg viewBox="0 0 52 52"><rect width="52" height="52" rx="12" fill="#fafafa"/><path d="M0 14h52M0 20h52M0 26h52M0 32h52M0 38h52M9 1v50" stroke="#bbb"/><path d="M44-4l6 2-24 52-5 4 1-7z" fill="#c4c4c4" stroke="#666"/></svg></button>
  <hr>
  <button aria-label="Downloads"><svg viewBox="0 0 52 52"><path d="M7-5h34v14H7z" fill="#ccc"/><path d="M6 1h28l12 14v41H6z" fill="#f2f2f2"/><path d="M31 0l14 17H31z" fill="#d4d4d4"/></svg></button>
  <button aria-label="Trash"><svg viewBox="0 0 52 52"><path d="M3 4h46l-6 46q-17 7-34 0z" fill="#8a8a8a"/><path d="M10 8h32l-4 38q-12 5-24 0z" fill="#767676"/><path d="M6 6 12-4l9 3 6-3 4 4 8-4 8 10-8 2-7-4-8 3-6-3-6 3z" fill="#eee"/><path d="M12 2l6 3M26 1l5 4M38 0l-3 5" stroke="#444" stroke-width="2"/><ellipse cx="26" cy="5" rx="23" ry="4" fill="none" stroke="#aaa"/></svg></button>
</nav>
<svg class="cursor" width="24" height="36" viewBox="0 0 24 36" aria-hidden="true"><path d="M2 2v26l6-6 4 10 5-2-4-10h9z" fill="#000" stroke="#fff" stroke-width="2"/></svg>
</body>
</html>
```
FILE: styles.css
```css
* { box-sizing: border-box; }

body {
  margin: 0;
  min-height: 100vh;
  position: relative;
  display: flex;
  flex-direction: column;
  overflow: hidden;
  background: #0e0e0e;
  color: #1c1c1c;
  font-family: Inter, "Liberation Sans", sans-serif;
  font-size: 24px;
}

button {
  margin: 0;
  padding: 0;
  border: 0;
  background: none;
  color: inherit;
  font: inherit;
}

a { color: inherit; text-decoration: none; }
svg { display: block; flex: none; overflow: visible; }
.sprite { position: absolute; width: 0; height: 0; overflow: hidden; }

/* Menu bar */
.menubar {
  position: relative;
  z-index: 3;
  display: flex;
  justify-content: space-between;
  align-items: center;
  height: 48px;
  padding: 0 38px 0 44px;
  background: linear-gradient(90deg, #cacaca, #dcdcdc 35%, #dadada 50%, #c6c6c6);
  font-size: 25px;
}
.menus, .status { display: flex; align-items: center; }
.menus { gap: 43px; }
.menus .strong { margin-left: 2px; font-weight: 700; }
.status { gap: 36px; }
.status time { font-size: 26px; }
.pale { color: #ccc; }

/* Desktop windows */
.desktop { position: relative; flex: 1; }
.window { position: absolute; overflow: hidden; }

.behind {
  inset: auto 0 2px 0;
  height: 112px;
  display: flex;
  justify-content: flex-end;
  align-items: flex-end;
  padding: 0 40px 20px 0;
  border: 2px solid #444;
  border-radius: 0 0 22px 22px;
  background:
    linear-gradient(90deg, #555 50%, #ccc 98%) 0 57px / 100% 2px no-repeat,
    linear-gradient(90deg, #141414 50%, #b0b0b0 98%) top / 100% 58px no-repeat,
    #262626;
  color: #ddd;
}

.exchange {
  inset: 1px 0 99px 0;
  display: flex;
  align-items: flex-end;
  padding-top: 60px;
  border: 1px solid #111;
  border-radius: 20px;
  background: #e8e8e8;
}
.exchange > div { align-self: stretch; display: flex; align-items: flex-end; }
.rail { width: 96px; padding: 0 0 41px 36px; background: #fafafa; }
.chart { flex: none; width: 1606px; border-left: 32px solid #dedede; background: #fafafa; position: relative; }
.scale {
  position: absolute;
  right: 25px;
  bottom: 11px;
  margin: 0;
  padding: 0;
  list-style: none;
  color: #707070;
  font: 22px/58px "Liberation Sans", Arial, sans-serif;
}
.scale li:last-child { line-height: 28px; padding-top: 15px; }
.book { flex: 1; border: solid #dedede; border-width: 0 30px 0 32px; background: #f2f2f2; }
.trades { width: 574px; position: relative; border-right: 32px solid #e4e4e4; overflow: hidden; }
.trades table {
  width: 100%;
  margin-bottom: -25px;
  table-layout: fixed;
  border-collapse: collapse;
  font: 24px/28px Roboto, "Liberation Sans", sans-serif;
  color: #333;
}
.trades tr { height: 40px; background: #efefef; }
.trades tr:nth-child(even) { background: #fafafa; }
.trades td { padding: 7px 0 5px; }
.trades td:first-child { width: 252px; padding: 11px 0 1px 30px; }
.trades td:nth-child(2) { width: 160px; }
.trades .sell { color: #444; }
.trades .buy { color: #888; }
.trades i { font-style: normal; color: #bbb; }
.chat {
  position: absolute;
  right: 16px;
  bottom: 39px;
  width: 120px;
  height: 120px;
  display: grid;
  place-items: center;
  border-radius: 50%;
  background: #868686;
}

/* Browser */
.browser {
  inset: 9px -4px 268px 9px;
  display: flex;
  flex-direction: column;
  border: 1px solid #000;
  border-radius: 22px;
  background: #fff;
  box-shadow: 0 50px 72px rgba(0, 0, 0, .6);
}
.tabstrip {
  display: flex;
  flex: none;
  height: 84px;
  padding-left: 42px;
  border-top: 2px solid #6c6c6c;
  background: #222;
}
.lights { display: flex; gap: 16px; width: 146px; padding-top: 29px; flex: none; }
.lights button { width: 24px; height: 24px; border-radius: 50%; background: #a2a2a2; }
.lights button:first-child { background: #767676; }

.tabs { display: flex; padding-top: 14px; }
.tabs a {
  position: relative;
  display: flex;
  align-items: center;
  gap: 17px;
  width: 120px;
  padding-left: 14px;
  color: #c4c4c4;
  font-size: 23px;
}
.tabs a::after {
  content: "";
  position: absolute;
  right: 0;
  top: 15px;
  width: 2px;
  height: 40px;
  background: #5c5c5c;
}
.tabs a:nth-child(19)::after { display: none; }
.tabs svg { width: 32px; height: 32px; }
.tabs span {
  width: 42px;
  overflow: hidden;
  white-space: nowrap;
  mask-image: linear-gradient(90deg, #000 60%, transparent);
}
.tabs .active { background: #373737; border-radius: 16px 16px 0 0; color: #fff; }
.tabs .active::before,
.tabs .active::after {
  content: "";
  position: absolute;
  top: auto;
  bottom: 0;
  left: -16px;
  width: 16px;
  height: 16px;
  background: radial-gradient(circle at 0 0, transparent 15px, #373737 16px);
}
.tabs .active::after { left: auto; right: -16px; background: radial-gradient(circle at 100% 0, transparent 15px, #373737 16px); }
.tabs .active .sliver { width: 3px; }
.tabs .active button svg { width: 16px; height: 16px; }
.tabs .active button { margin-left: -1px; }
.newtab { display: grid; place-items: center; width: 88px; padding-top: 14px; }

.toolbar {
  display: flex;
  align-items: center;
  flex: none;
  height: 64px;
  padding: 8px 6px 0 12px;
  background: #373737;
}
.toolbar > button, .extensions button { display: grid; place-items: center; width: 64px; height: 56px; }
.omnibox {
  flex: 1;
  display: flex;
  align-items: center;
  height: 56px;
  margin: 0 12px;
  padding: 0 21px 0 28px;
  border-radius: 28px;
  background: #222;
  color: #fff;
  font-size: 28px;
}
.omnibox a { flex: 1; padding-left: 24px; }
.omnibox span { color: #8c8c8c; }
.extensions { display: flex; }
.extensions button { position: relative; }
.extensions svg { width: 32px; height: 32px; }
.extensions .avatar { width: 44px; height: 44px; }
.extensions b {
  position: absolute;
  right: 4px;
  bottom: 0;
  min-width: 24px;
  padding: 0 5px;
  border-radius: 4px;
  background: #666;
  color: #fff;
  font: 500 18px/24px Inter, sans-serif;
  text-align: center;
}
.extensions .black { background: #121212; }
.extensions .pale { background: #969696; }
.extensions .wide { right: 6px; background: #7a7a7a; }

.bookmarks {
  display: flex;
  align-items: center;
  flex: none;
  gap: 34px;
  height: 74px;
  padding: 0 28px;
  border-bottom: 2px solid #2a2a2a;
  background: #373737;
  color: #fff;
  font-size: 24px;
}
.bookmarks a { display: flex; align-items: center; gap: 16px; }
.bookmarks svg { width: 32px; height: 32px; }

article {
  max-width: 2240px;
  padding: 79px 0 0 111px;
  color: #222;
  font: 55px/106px "Noto Sans CJK KR", "Open Sans", sans-serif;
}
article p { margin: 0 0 82px; }

/* Dock */
.dock {
  position: absolute;
  z-index: 2;
  left: 53px;
  right: 51px;
  bottom: 10px;
  height: 88px;
  display: flex;
  align-items: flex-start;
  padding: 13px 5px 0 3px;
  border: 2px solid #585858;
  border-radius: 28px;
  background: linear-gradient(90deg, #2e2e2e, #363636 65%, #505050 80%, #5a5a5a);
  box-shadow: 0 0 40px rgba(0, 0, 0, .3);
}
.dock button {
  position: relative;
  flex: 1;
  display: flex;
  flex-direction: column;
  align-items: center;
  gap: 9px;
}
.dock svg { width: 52px; height: 52px; }
.dock .tile { border-radius: 12px; overflow: hidden; }
.dock .on::after { content: ""; width: 8px; height: 8px; border-radius: 50%; background: #c0c0c0; }
.dock b {
  position: absolute;
  top: -7px;
  right: 2px;
  width: 24px;
  border-radius: 12px;
  background: #5e5e5e;
  color: #eee;
  font: 16px/24px Inter, sans-serif;
  text-align: center;
}
.dock hr { width: 2px; height: 64px; margin: -3px 15px 0; border: 0; background: #777; }
.light { color: #fff; }
.ink { color: #333; }

.cursor { position: absolute; z-index: 4; left: 1541px; top: 970px; }
```
